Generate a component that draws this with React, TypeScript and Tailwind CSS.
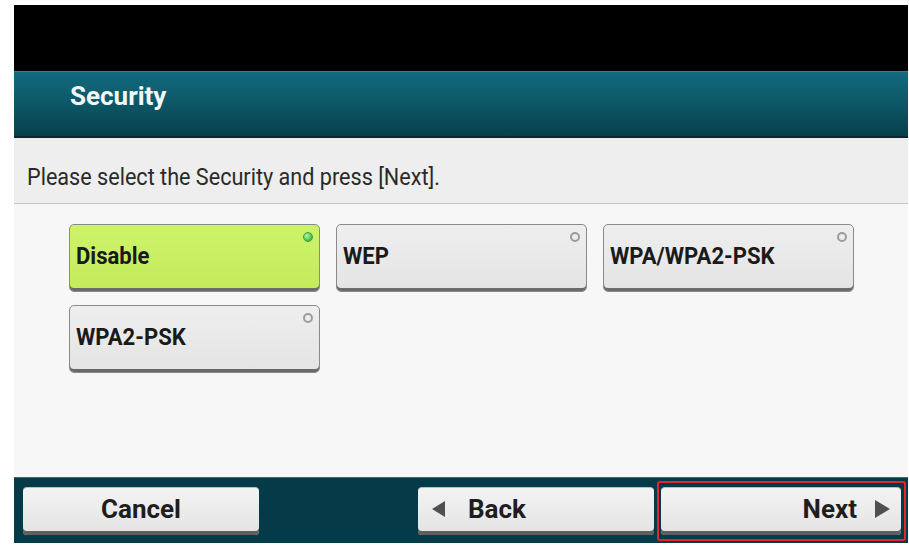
import React from "react";

const options = [
  { label: "Disable", selected: true },
  { label: "WEP", selected: false },
  { label: "WPA/WPA2-PSK", selected: false },
  { label: "WPA2-PSK", selected: false },
];

const RadioDot = ({ on }: { on: boolean }) =>
  on ? (
    <span className="absolute top-[7px] right-[6px] w-[10px] h-[10px] rounded-full bg-[radial-gradient(circle_at_35%_35%,#b6f5a8,#4cc94e_60%,#2f9a35)] border border-[#3a9c3e]" />
  ) : (
    <span className="absolute top-[7px] right-[6px] w-[10px] h-[10px] rounded-full bg-[#ececec] border-2 border-[#9b9b9b]" />
  );

const OptionButton = ({ label, selected }: { label: string; selected: boolean }) => (
  <button
    className={`relative h-[68px] w-[251px] rounded-[5px] border border-[#8a8a8a] pl-[6px] pb-[3px] text-left shadow-[inset_0_-3px_0_#6a6a6a] ${
      selected
        ? "bg-gradient-to-b from-[#cef36a] to-[#c3eb5a]"
        : "bg-gradient-to-b from-[#eeeeee] to-[#e4e4e4]"
    }`}
  >
    <span className="inline-block origin-left scale-x-[0.92] text-[24px] font-bold leading-[28px] text-[#1a1a1a]">
      {label}
    </span>
    <RadioDot on={selected} />
  </button>
);

const TriLeft = () => (
  <svg width="16" height="20" viewBox="0 0 16 20">
    <path d="M15 2 L2 10 L15 18 Z" fill="#505050" />
  </svg>
);

const TriRight = () => (
  <svg width="18" height="20" viewBox="0 0 18 20">
    <path d="M2 1 L17 10 L2 19 Z" fill="#505050" />
  </svg>
);

const barButton =
  "h-[48px] rounded-[4px] border-t border-[#bdbdbd] bg-gradient-to-b from-[#f3f3f3] to-[#e3e3e3] shadow-[inset_0_-4px_0_#5f5f5f] text-[26px] font-bold text-[#1e1e1e] leading-[30px] flex items-center pb-[4px]";

const App = () => {
  return (
    <div
      className="w-[909px] h-[548px] bg-white pt-[5px] pl-[14px] pr-[1px] pb-[5px] flex flex-col"
      style={{ fontFamily: "Roboto, 'Liberation Sans', sans-serif" }}
    >
      <div className="h-[66px] bg-black" />

      <div className="h-[67px] bg-gradient-to-b from-[#126a7e] via-[#0c5767] to-[#093f4b] border-t border-[#2d7f91] border-b-2 border-b-[#10262d] pl-[56px] pt-[9px]">
        <h1 className="text-[26px] font-bold leading-[30px] text-[#f2f7f8]">Security</h1>
      </div>

      <div className="h-[66px] bg-[#eeeeee] border-b border-[#c6c6c6] pl-[13px] pt-[25px]">
        <p className="inline-block origin-left scale-x-[0.9] text-[24px] leading-[28px] text-[#2a2a2a]">
          Please select the Security and press [Next].
        </p>
      </div>

      <div className="flex-1 bg-[#f7f7f7] pt-[20px] pl-[55px]">
        <div className="grid grid-cols-[251px_251px_251px] gap-x-[16px] gap-y-[13px]">
          {options.map((o) => (
            <OptionButton key={o.label} label={o.label} selected={o.selected} />
          ))}
        </div>
      </div>

      <div className="h-[66px] bg-[#053a48] border-t border-[#3d6a75] flex items-center pl-[9px] pr-[2px]">
        <button className={`${barButton} w-[236px] justify-center`}>Cancel</button>
        <button className={`${barButton} w-[236px] ml-auto pl-[12px] gap-[22px]`}>
          <TriLeft />
          <span>Back</span>
        </button>
        <div className="ml-[3px] w-[249px] h-[60px] rounded-[3px] border-2 border-[#e3262c] pl-[2px] pr-[3px] flex items-center">
          <button className={`${barButton} w-full justify-end pr-[10px] gap-[16px]`}>
            <span>Next</span>
            <TriRight />
          </button>
        </div>
      </div>
    </div>
  );
};

export default App;
